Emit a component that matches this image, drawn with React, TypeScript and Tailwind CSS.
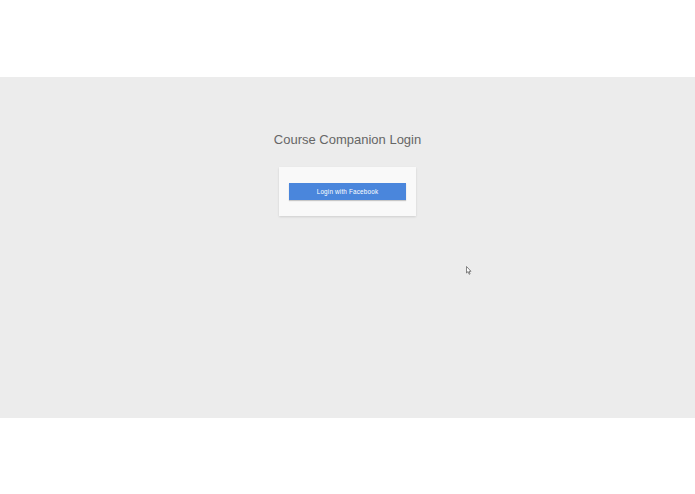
export default function App() {
  return (
    <div className="w-[695px] h-[494px] bg-white flex flex-col font-['Liberation_Sans',Arial,sans-serif]">
      <div className="h-[77px]" />
      <div className="relative h-[341px] bg-[#ececec] flex flex-col items-center">
        <h1 className="mt-[54px] text-[13px] leading-[17px] text-[#666666]">Course Companion Login</h1>
        <div className="mt-[19px] w-[137px] h-[49px] bg-[#f9f9f9] shadow-[0_1px_2px_rgba(0,0,0,0.12)] flex justify-center pt-[16px]">
          <button className="w-[117px] h-[17px] bg-[#4a86dc] text-white text-[6.3px] tracking-[0.2px] flex items-center justify-center shadow-[0_1px_1px_rgba(0,0,0,0.2)]">
            Login with Facebook
          </button>
        </div>
        {/* mouse pointer */}
        <svg className="absolute left-[466px] top-[189px]" width="6" height="9" viewBox="0 0 6 9">
          <path d="M0.5 0.5 L0.5 7 L2 5.6 L3.2 8.3 L4.1 7.9 L3 5.3 L5 5.3 Z" fill="#fff" stroke="#555" strokeWidth="0.7" />
        </svg>
      </div>
      <div className="flex-1" />
    </div>
  );
}
